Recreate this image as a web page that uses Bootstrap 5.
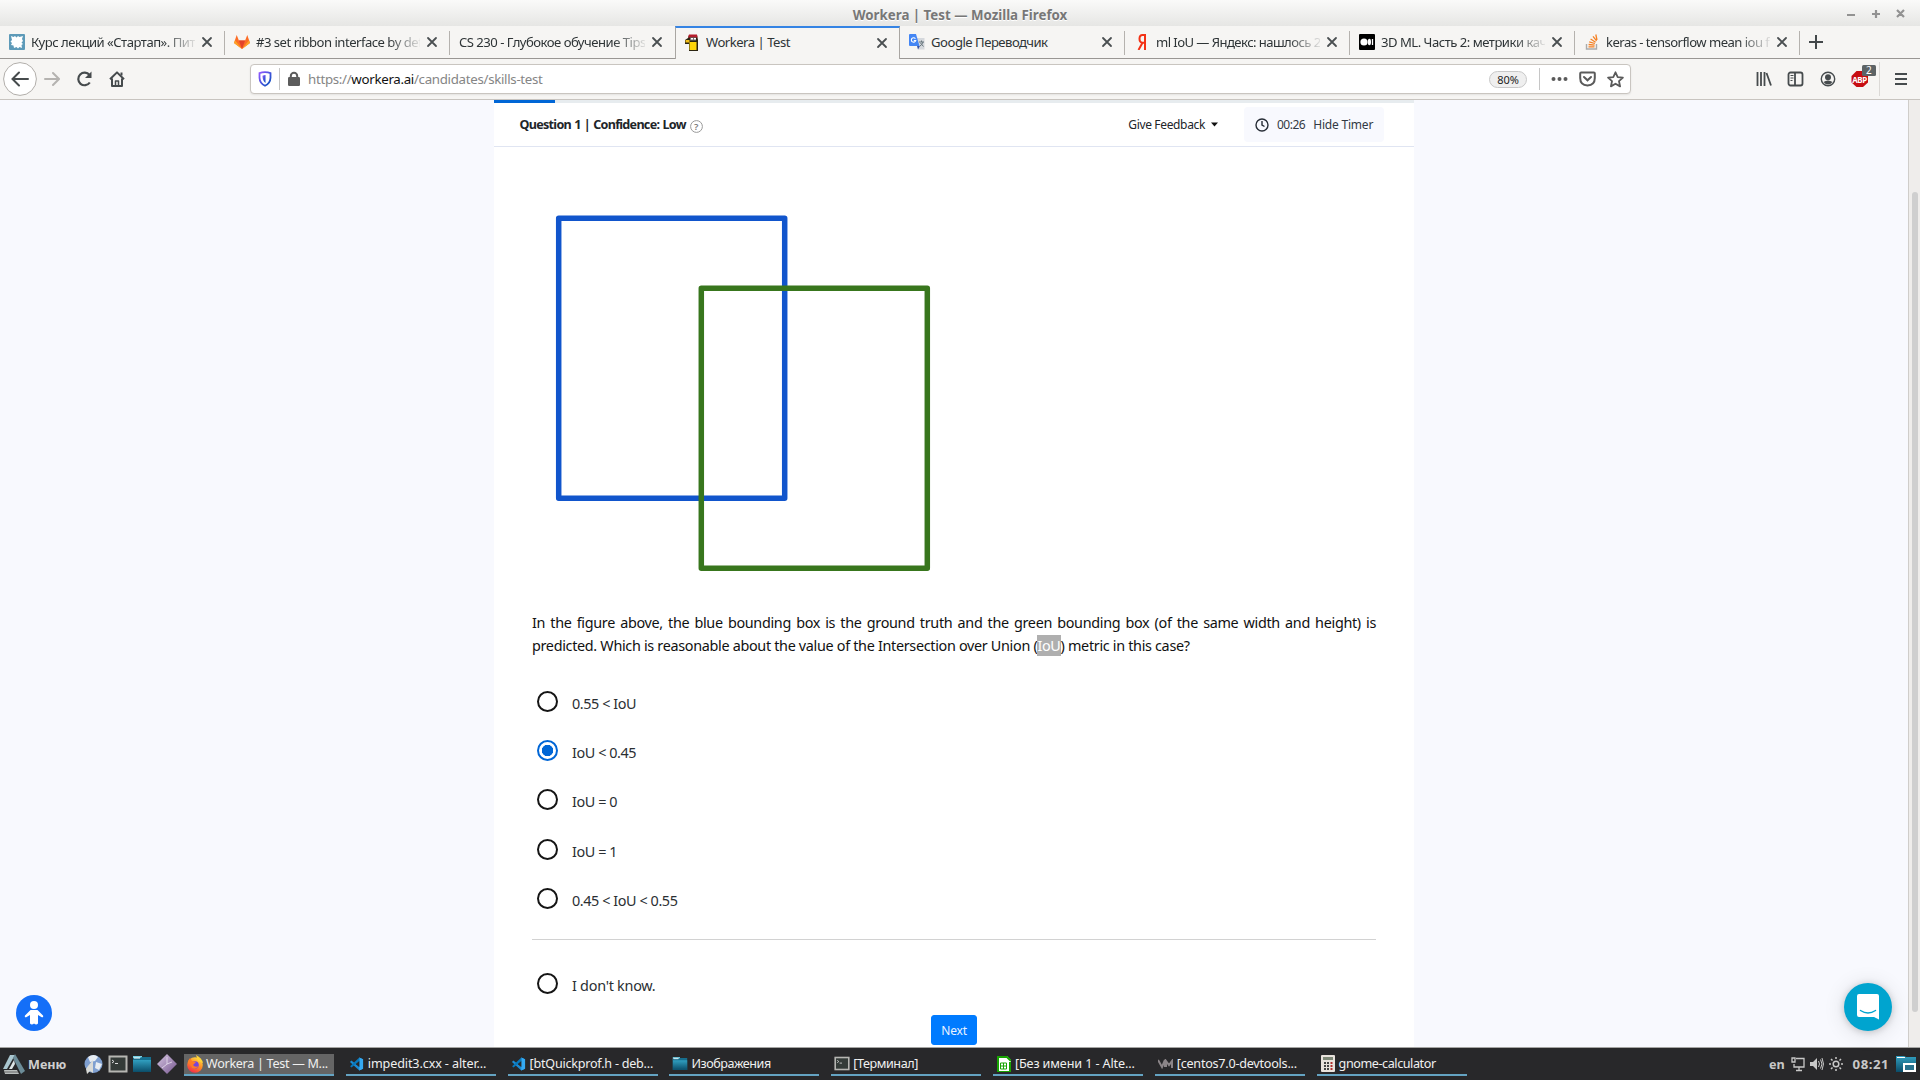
<!DOCTYPE html>
<html lang="ru">
<head>
<meta charset="utf-8">
<title>Workera | Test</title>
<link rel="stylesheet" href="https://cdn.jsdelivr.net/npm/bootstrap@5.3.0/dist/css/bootstrap.min.css">
<style>
body{font-family:"Noto Sans","Open Sans",sans-serif;width:1920px;height:1080px;overflow:hidden;background:#f8f9fe;color:#212529;font-size:13px;line-height:1.2}
svg{display:block;flex:none}
.winbar{height:26px;background:linear-gradient(#fafaf9,#e6e6e4);color:#777}
.winbar .wtitle{font-weight:700;font-size:13.3px;padding-top:8px;line-height:15px;text-shadow:0 1px 0 #fff}
.winctl{right:14px;top:6px}
.tabstrip{height:33px;background:#f6f5f3}
.btab{width:225px;height:33px;padding:0 12px 0 9px;border-bottom:1px solid #999693;color:#2e3436;font-size:13.1px;letter-spacing:-.5px;position:relative}
.btab::after{content:"";position:absolute;right:0;top:5px;height:24px;width:1px;background:#b5b2ae}
.btab.noline::after{display:none}
.btab.current{border-top:2px solid #3584e4;border-bottom:0;border-left:1px solid #a9a6a2;border-right:1px solid #a9a6a2;padding-bottom:2px;padding-left:8px;padding-right:11px}
.btab .tlabel{flex:1 1 0;overflow:hidden;white-space:nowrap;margin-left:6px;margin-right:6px;padding-top:1px}
.btab .fade-end{-webkit-mask-image:linear-gradient(to right,#000 calc(100% - 32px),rgba(0,0,0,.1));mask-image:linear-gradient(to right,#000 calc(100% - 32px),rgba(0,0,0,.1))}
.tabrest{flex:1;border-bottom:1px solid #999693}
.toolbar-ff{height:41px;background:#f6f5f3;border-bottom:1px solid #c8c4bf}
.navicons{width:250px;padding-left:3px}
.urlbox{width:1381px;height:30px;border:1px solid #c9c5c0;border-radius:4px;background:#fff;box-shadow:0 1px 2px rgba(0,0,0,.08);color:#858585;font-size:13.3px}
.urlbox .address{margin-left:7px;padding-top:1px;letter-spacing:-.31px}
.urlbox b{font-weight:400;color:#111}
.vline{width:1px;height:22px;background:#c6c6c6}
.zoompill{width:38px;height:17px;border:1px solid #c8c8c8;border-radius:9px;background:#efefef;color:#222;font-size:11px;line-height:15px;margin-right:1px}
.viewport{height:947px}
.pane{width:1908px}
.sheet{width:920px;background:#fff}
.qprogress{height:3px;background:#e7ecef;border-radius:0}
.qprogress .progress-bar{background:#0066d6}
.qhead{height:44px;padding:0 30px 0 25.5px;border-bottom:1px solid #e0e5f2;font-size:12px}
.qhead>span,.timerbox span{padding-top:1px}
.qtitle{font-weight:700;font-size:12.6px;letter-spacing:-.72px;word-spacing:.6px}
.timerbox{width:140px;height:35px;background:#f8f9fe;border-radius:4px;padding-left:11px;color:#333a44}
.qtext{margin:0 38px;line-height:23px;font-size:14.4px;color:#111;text-align:justify;letter-spacing:-.32px}
.picked{background:#afafaf;color:#fff;padding:1px 0}
.opts{padding-left:43px}
.opt{height:49.2px;font-size:14.4px;color:#2b2f33;letter-spacing:-.42px}
.ring{width:21px;height:21px;border:2px solid #151515;border-radius:50%;margin-right:14px}
.ring.on{border-color:#0066d6;background:radial-gradient(circle,#0066d6 0 5.4px,#fff 6px)}
.opt span{padding-top:4px}
.rule{height:1px;background:#d2d2d2;margin:0 38px}
.btn-next{width:46px;height:30px;background:#007bff;border-color:#007bff;color:#e8f3ff;font-size:12px;border-radius:3px;padding:1px 0 0;letter-spacing:-.2px}
.scroller{width:12px;background:#efedeb;border-left:1px solid #cfcdca}
.thumb{width:6px;height:820px;margin:92px 0 0 3px;border-radius:4px;background:#cfcfcf}
.a11y{left:16px;top:895px}
.chat{left:1844px;top:883px;width:48px;height:48px;border-radius:50%;background:#00a4cf;box-shadow:0 1px 7px rgba(0,0,0,.18),0 2px 22px rgba(0,0,0,.12)}
.panelbar{height:33px;background:#28282a;border-top:1px solid #a5a5a3;color:#f0f0f0;font-size:12.6px}
.panelbar span{padding-top:1px}
.menu-btn{width:84px;padding-left:2px;font-weight:700;color:#cfcfcf}
.quick{width:100px}
.tasks{gap:11.8px;padding-top:1px}
.task{width:150px;height:22px;border-bottom:2px solid #64a3c2;padding-left:3px;white-space:nowrap;letter-spacing:-.12px}
.task.tight{letter-spacing:-.43px}
.task.snug{letter-spacing:-.24px}
.task.live{background:#656565;letter-spacing:-.3px}
.panelbar .tray{color:#c8c8c8;font-weight:700;margin-right:4px}
.clock{font-size:13.2px;letter-spacing:.5px;margin-left:10px}
</style>
<script src="https://cdn.jsdelivr.net/npm/bootstrap@5.3.0/dist/js/bootstrap.bundle.min.js"></script>
</head>
<body class="d-flex flex-column">
<svg width="0" height="0" class="position-absolute">
<symbol id="x" viewBox="0 0 12 12"><path d="M2 2l8 8M10 2l-8 8" stroke="#4a4f51" stroke-width="1.8" stroke-linecap="round"/></symbol>
<symbol id="vs" viewBox="0 0 16 16"><path d="M11 1l4 2v10l-4 2L1 5.800 2.500 4.300 11 11z" fill="#1b8bd4"/><path d="M11 1l4 2v10l-4 2z" fill="#35a9f2"/><path d="M11 4.800v6.400L7 8z" fill="#28282a"/><path d="M1.200 10.400L11 1v3.800L2.700 11.800z" fill="#0879bd"/></symbol>
<symbol id="folder" viewBox="0 0 20 18"><path d="M1 1h9v4H1z" fill="#78d0e4"/><path d="M1 3h7l2-1h9v15H1z" fill="#176e8d"/><path d="M1 5h18v12H1z" fill="url(#fg)"/><path d="M2 3h6" stroke="#fff"/></symbol>
<symbol id="term" viewBox="0 0 20 18"><path d="M.5.5h19v17H.5z" fill="#b6b6b2"/><path d="M2.500 2.500h15v13h-15z" fill="#343b38"/><path d="M4 5l2 1.500L4 8M7 8.500h3" fill="none" stroke="#ddd"/></symbol>
<linearGradient id="fg" x2="0" y2="1"><stop stop-color="#319fc0"/><stop offset="1" stop-color="#0b4d69"/></linearGradient>
<linearGradient id="ff" x1=".8" y1="0" x2=".3" y2="1"><stop stop-color="#ffe34a"/><stop offset=".5" stop-color="#ff8a22"/><stop offset="1" stop-color="#f5274e"/></linearGradient>
<linearGradient id="sh" x2="1" y2="1"><stop stop-color="#9059ff"/><stop offset="1" stop-color="#0250bb"/></linearGradient>
<linearGradient id="dm" x2="1" y2="1"><stop stop-color="#d6c6e2"/><stop offset="1" stop-color="#76568f"/></linearGradient>
</svg>

<header class="winbar position-relative text-center">
  <div class="wtitle">Workera | Test — Mozilla Firefox</div>
  <svg class="winctl position-absolute" width="60" height="16" fill="none" stroke="#929292" stroke-width="2.2"><path d="M1 9h8M26 8h8M30 4v8M51 4l7 7M58 4l-7 7"/></svg>
</header>

<nav class="tabstrip d-flex">
  <div class="btab d-flex align-items-center">
    <svg width="16" height="16"><rect width="16" height="16" rx="1" fill="#5d9ab8"/><path d="M2 2l2.500 1L6 2l1.500 1.500L9 2l1.500 1L14 2l-1 3 1 2-1.500 1.500L14 10l-1.500 1 .5 3-2.500-1L9 14.500 7.500 13 5 14l-.5-2.500L2 11l1-2-1.500-1.500L3 6z" fill="#fff"/></svg>
    <span class="tlabel fade-end">Курс лекций «Стартап». Питер</span><svg width="12" height="12"><use href="#x"/></svg></div>
  <div class="btab d-flex align-items-center">
    <svg width="16" height="16" viewBox="0 0 16 16"><path d="M8 15L0 9l2.700-8 2.200 5.500h6.200L13.300 1 16 9z" fill="#fc6d26"/><path d="M8 15L4.900 6.500h6.200z" fill="#e24329"/><path d="M0 9l1-2.800L8 15zM16 9l-1-2.800L8 15z" fill="#fca326"/></svg>
    <span class="tlabel fade-end">#3 set ribbon interface by default</span><svg width="12" height="12"><use href="#x"/></svg></div>
  <div class="btab noline d-flex align-items-center">
    <span class="tlabel fade-end ms-0">CS 230 - Глубокое обучение Tips</span><svg width="12" height="12"><use href="#x"/></svg></div>
  <div class="btab current d-flex align-items-center noline">
    <svg width="16" height="18" viewBox="0 0 16 18"><path d="M5 1h8l1 5v11H5v-7H1V6l3-2z" fill="#2b2411"/><path d="M5.500 8h7v8h-7z" fill="#ffd60a"/><path d="M5 .5h8l.5 3H4z" fill="#b51d2d"/><path d="M1.500 6h4v2.500h-4z" fill="#f2bf18"/><path d="M6 3.500h6v3H6z" fill="#777"/><path d="M7 4h2v1.500H7zM10 4h2v1.500h-2z" fill="#fff"/></svg>
    <span class="tlabel">Workera | Test</span><svg width="12" height="12"><use href="#x"/></svg></div>
  <div class="btab d-flex align-items-center">
    <svg width="16" height="16" viewBox="0 0 16 16"><path d="M6 4h9.500v11.500H9z" fill="#d5d8dc"/><path d="M0 1q0-1 1-1h6l3.500 12H1q-1 0-1-1z" fill="#4486f4"/><path d="M8 12h3l-2 3.500z" fill="#3454a8"/><path d="M6.400 4.700A2.200 2.200 0 1 0 6.700 6.500H4.800" fill="none" stroke="#fff" stroke-width="1.100"/><path d="M10 8h5M12.500 6.500V8M14 8q-1 3-3 4M11.500 9l3 3.500" stroke="#68767c" fill="none"/></svg>
    <span class="tlabel">Google Переводчик</span><svg width="12" height="12"><use href="#x"/></svg></div>
  <div class="btab d-flex align-items-center">
    <svg width="16" height="16" viewBox="0 0 16 16"><path d="M11 0v16M11 1H8.500Q5.500 1 5.500 4.800T8.500 8.700H11M8.500 8.700L4.500 16" fill="none" stroke="#f33216" stroke-width="2"/></svg>
    <span class="tlabel fade-end" style="letter-spacing:-.57px">ml IoU — Яндекс: нашлось 2 тыс</span><svg width="12" height="12"><use href="#x"/></svg></div>
  <div class="btab d-flex align-items-center">
    <svg width="16" height="16"><rect width="16" height="16" rx="1" fill="#000"/><circle cx="5" cy="8" r="3.600" fill="#fff"/><ellipse cx="10.400" cy="8" rx="1.600" ry="3.300" fill="#fff"/><path d="M13.500 5v6" stroke="#fff" stroke-width="1.300"/></svg>
    <span class="tlabel fade-end">3D ML. Часть 2: метрики качества</span><svg width="12" height="12"><use href="#x"/></svg></div>
  <div class="btab d-flex align-items-center">
    <svg width="16" height="16" viewBox="0 0 16 16" fill="none"><path d="M2.500 10v5h10v-5" stroke="#aaa" stroke-width="1.400"/><path d="M4.500 12.800h6M4.600 10.500l6 .7M5.200 7.800l5.700 1.700M6.600 5l5 3.200M9 2.300l3.600 4.500M11.800.5l1.200 5.500" stroke="#f48024" stroke-width="1.300"/></svg>
    <span class="tlabel fade-end" style="letter-spacing:-.54px">keras - tensorflow mean iou for</span><svg width="12" height="12"><use href="#x"/></svg></div>
  <div class="tabrest d-flex align-items-center ps-2"><svg width="16" height="16"><path d="M1 8h14M8 1v14" stroke="#43484a" stroke-width="2"/></svg></div>
</nav>

<div class="toolbar-ff d-flex align-items-center">
  <div class="navicons d-flex align-items-center">
    <svg width="34" height="34" fill="none"><circle cx="17" cy="17" r="16.400" fill="#fff" stroke="#b1aeaa"/><path d="M25 17H10M16 10.500L9.500 17l6.500 6.500" stroke="#464b4d" stroke-width="2" stroke-linecap="round"/></svg>
    <svg style="margin-left:7px" width="16" height="16" fill="none" stroke="#b5b3b0" stroke-width="2" stroke-linecap="round"><path d="M1 8h13M9 2l6 6-6 6"/></svg>
    <svg style="margin-left:16px" width="18" height="18" fill="none" stroke="#464b4d" stroke-width="2.200"><path d="M13.800 12.500A6.300 6.300 0 1 1 13.500 5"/><path d="M15.500 1.500v6.500H9z" fill="#464b4d" stroke="none"/></svg>
    <svg style="margin-left:15px" width="16" height="16" fill="none" stroke="#464b4d" stroke-width="2" stroke-linejoin="round"><path d="M1 8.200L8 1.400l7 6.800M3 7.500V15h10V7.500"/><path d="M6.500 15v-5h3v5z" stroke-width="1.500"/><path d="M12.500 1.500v3"/></svg>
  </div>
  <div class="urlbox d-flex align-items-center">
    <svg style="margin-left:7px" width="14" height="16" viewBox="0 0 14 16" fill="none"><path d="M7 1.200q3 0 5.500 1v4.500Q12.200 12.500 7 14.800 1.800 12.500 1.500 6.700V2.200Q4 1.200 7 1.200z" stroke="url(#sh)" stroke-width="1.800"/><path d="M7.500 4v8Q4.500 10 4.500 4.800 6 4 7.500 4z" fill="url(#sh)"/></svg>
    <div class="vline" style="margin:0 7px 0 7px"></div>
    <svg width="14" height="16"><rect x="1" y="6" width="12" height="9" rx="1.200" fill="#5c5c5c"/><path d="M3.800 7V5a3.200 3.200 0 0 1 6.400 0v2" fill="none" stroke="#5c5c5c" stroke-width="2"/></svg>
    <span class="address">https://<b>workera.ai</b>/candidates/skills-test</span>
    <div class="zoompill text-center ms-auto">80%</div>
    <div class="vline" style="margin:0 11px 0 11px"></div>
    <svg width="17" height="6" fill="#5a5a5a"><circle cx="2.500" cy="3" r="2"/><circle cx="8.500" cy="3" r="2"/><circle cx="14.500" cy="3" r="2"/></svg>
    <svg style="margin-left:11px" width="17" height="16" fill="none" stroke="#5a5a5a" stroke-width="2"><path d="M2.200 1.500h12.600q1 0 1 1V7q0 7-7.300 7.500Q1.200 14 1.200 7V2.500q0-1 1-1z"/><path d="M5 6l3.500 3.300L12 6" stroke-linecap="round"/></svg>
    <svg style="margin:0 6px 0 11px" width="17" height="17" viewBox="0 0 17 17" fill="none" stroke="#5a5a5a" stroke-width="1.800" stroke-linejoin="round"><path d="M8.500 1.300l2.200 4.800 5.200.6-3.900 3.500 1.100 5.200-4.600-2.700-4.600 2.700L5 10.200 1.100 6.700l5.200-.6z"/></svg>
  </div>
  <div class="d-flex align-items-center ms-auto position-relative" style="margin-right:13px">
    <svg width="16" height="16" stroke="#464b4d" stroke-width="1.800"><path d="M1.500 1v14M5 1v14M8.500 1v14M10.500 2l4.500 12.500"/></svg>
    <svg style="margin-left:15px" width="17" height="16" fill="none" stroke="#464b4d" stroke-width="1.800"><rect x="1.500" y="1.500" width="14" height="13" rx="2"/><path d="M8 2v12"/><path d="M3.500 4.500h3M3.500 7h3M3.500 9.500h2" stroke-width="1"/></svg>
    <svg style="margin-left:16px" width="16" height="16"><circle cx="8" cy="8" r="6.700" fill="none" stroke="#464b4d" stroke-width="1.400"/><circle cx="8" cy="6.200" r="3" fill="#464b4d"/><path d="M3.500 11q2-1.500 4.500-1.500t4.500 1.500Q10.500 13.500 8 13.500T3.500 11z" fill="#464b4d"/></svg>
    <svg style="margin-left:15px" width="25" height="30" viewBox="0 0 25 30"><path d="M5.500 7h6.500L17 12v6.500L12 23H5.500L.5 18.500V12z" fill="#c70d12"/><text x="1.200" y="18.500" font-size="8" font-weight="700" fill="#fff" textLength="15">ABP</text><rect x="11" y="1" width="14" height="11" rx="1.500" fill="#5d6365"/><text x="15" y="10.300" font-size="10" fill="#fff">2</text></svg>
    <div class="vline" style="height:34px;margin:0 15px 0 3px;background:#dbd9d6"></div>
    <svg width="12" height="14" stroke="#464b4d" stroke-width="2"><path d="M0 2h12M0 7h12M0 12h12"/></svg>
  </div>
</div>

<main class="viewport d-flex position-relative">
  <div class="pane d-flex justify-content-center">
    <section class="sheet d-flex flex-column">
      <div class="progress qprogress"><div class="progress-bar" style="width:6.6%"></div></div>
      <div class="qhead d-flex align-items-center">
        <span class="qtitle">Question 1 | Confidence: Low</span>
        <svg style="margin:3px 0 0 4px" width="13" height="13"><circle cx="6.500" cy="6.500" r="5.900" fill="none" stroke="#999"/><text x="4" y="10" font-size="9.500" fill="#777" font-weight="600">?</text></svg>
        <span class="ms-auto" style="letter-spacing:-.35px">Give Feedback</span>
        <svg style="margin:0 26px 0 6px" width="7" height="5"><path d="M0 .5h7L3.500 4.500z" fill="#111"/></svg>
        <div class="timerbox d-flex align-items-center">
          <svg width="14" height="14" fill="none" stroke="#272d36" stroke-width="1.400"><circle cx="7" cy="7" r="6"/><path d="M7 3v4l2.500 1.500"/></svg>
          <span style="margin-left:8px;letter-spacing:-.5px">00:26</span><span style="margin-left:8px;letter-spacing:-.2px">Hide Timer</span>
        </div>
      </div>
      <svg width="920" height="464" fill="none" stroke-width="5.500" stroke-linejoin="round"><rect x="64.700" y="71.300" width="226" height="280" stroke="#1155cc"/><rect x="207.300" y="141.300" width="226" height="280" stroke="#38761d"/></svg>
      <p class="qtext">In the figure above, the blue bounding box is the ground truth and the green bounding box (of the same width and height) is predicted. Which is reasonable about the value of the Intersection over Union (<span class="picked">IoU</span>) metric in this case?</p>
      <div class="opts" style="padding-top:20px">
        <div class="opt d-flex align-items-center"><i class="ring"></i><span>0.55 &lt; IoU</span></div>
        <div class="opt d-flex align-items-center"><i class="ring on"></i><span>IoU &lt; 0.45</span></div>
        <div class="opt d-flex align-items-center"><i class="ring"></i><span>IoU = 0</span></div>
        <div class="opt d-flex align-items-center"><i class="ring"></i><span>IoU = 1</span></div>
        <div class="opt d-flex align-items-center"><i class="ring"></i><span>0.45 &lt; IoU &lt; 0.55</span></div>
      </div>
      <div class="rule" style="margin-top:16px"></div>
      <div class="opts" style="padding-top:19px"><div class="opt d-flex align-items-center" style="letter-spacing:-.25px"><i class="ring"></i><span>I don't know.</span></div></div>
      <button class="btn btn-primary btn-next" style="margin:7px 0 0 437px">Next</button>
    </section>
  </div>
  <div class="scroller"><div class="thumb"></div></div>
  <svg class="a11y position-absolute" width="36" height="36" viewBox="0 0 36 36"><circle cx="18" cy="18" r="18" fill="#146ff8"/><circle cx="18" cy="10" r="4" fill="#fff"/><path d="M14.500 15h7l5.500 5.500q.8 1.800-1.200 1.800L22 20v8.500q-1.800 2-4 0-2.200 2-4 0V20l-3.800 2.300Q8.200 22.300 9 20.500z" fill="#fff"/></svg>
  <div class="chat position-absolute d-flex align-items-center justify-content-center"><svg width="22" height="26" fill="#fff"><path d="M2 0h18q2 0 2 2v23.500l-5-2.500H2q-2 0-2-2V2q0-2 2-2z"/><path d="M3.500 16.500q7.500 5 15 0" fill="none" stroke="#00a4cf" stroke-width="1.500" stroke-linecap="round"/></svg></div>
</main>

<footer class="panelbar d-flex align-items-center">
  <div class="menu-btn d-flex align-items-center"><svg width="23" height="21" viewBox="0 0 23 21"><path d="M8 1h5L5 15H1z" fill="#a9c6cf"/><path d="M13 0l10 17-4 3L11 4z" fill="#6c8c98"/><path d="M12 6l-5 9h3l3-5z" fill="#dde5e6"/><path d="M2 16h13l2 4H3z" fill="#b9bdbc"/><path d="M3 18h13" stroke="#666"/></svg><span style="margin-left:3px">Меню</span></div>
  <div class="quick d-flex align-items-center">
    <svg width="19" height="20"><circle cx="9.500" cy="10" r="9" fill="#7f9fd0"/><path d="M4 3q6-4 10 0l-3 4-5 1zM12 8l6 2-3 6-4-2z" fill="#e8edf3"/><path d="M9 6v13l-3-2-3 3-1-5 2-3z" fill="#d9dad7"/></svg>
    <svg style="margin-left:5px" width="20" height="18"><use href="#term"/></svg>
    <svg style="margin-left:4px" width="20" height="18"><use href="#folder"/></svg>
    <svg style="margin-left:5px" width="20" height="20"><path d="M10 0l10 10-10 10L0 10z" fill="url(#dm)"/><path d="M10 3v7l-5 4M10 10l5-2" stroke="#e9dff0" stroke-width=".8" fill="none"/></svg>
  </div>
  <div class="d-flex tasks">
    <div class="task live d-flex align-items-center"><svg width="16" height="18" viewBox="0 0 16 18"><circle cx="8" cy="10" r="7.800" fill="url(#ff)"/><path d="M9 0q6 3 7 8l-5-2z" fill="#ffd236"/><circle cx="8" cy="10" r="3.800" fill="#7544dc"/><path d="M1 6l2-3 2 3 4 1-3 3q2 3 6 1-3 4-7 2z" fill="#ff7a24"/></svg><span style="margin-left:3px">Workera | Test — M...</span></div>
    <div class="task d-flex align-items-center"><svg width="15" height="16"><use href="#vs"/></svg><span class="ms-1">impedit3.cxx - alter...</span></div>
    <div class="task snug d-flex align-items-center"><svg width="15" height="16"><use href="#vs"/></svg><span class="ms-1">[btQuickprof.h - deb...</span></div>
    <div class="task tight d-flex align-items-center"><svg width="16" height="15"><use href="#folder"/></svg><span style="margin-left:3px">Изображения</span></div>
    <div class="task tight d-flex align-items-center"><svg width="16" height="15"><use href="#term"/></svg><span style="margin-left:3px">[Терминал]</span></div>
    <div class="task d-flex align-items-center"><svg style="margin-left:1px" width="14" height="16"><path d="M1 0h9l4 4v12H1z" fill="#fff"/><path d="M1 0v16h12V6M1 1h9l4 4" stroke="#18a303" stroke-width="2" fill="none"/><path d="M3.500 7h6v6h-6zM3.500 10h6M6.500 7v6" fill="none" stroke="#18a303"/></svg><span class="ms-1">[Без имени 1 - Alte...</span></div>
    <div class="task snug d-flex align-items-center"><svg width="15" height="10" fill="none" stroke="#8b8588" stroke-width="2"><path d="M0 1l4 7 3-7v7M8 8V2l3 4 3-4v7"/></svg><span class="ms-1">[centos7.0-devtools...</span></div>
    <div class="task tight d-flex align-items-center"><svg style="margin-left:1px" width="14" height="17"><rect width="14" height="17" rx="1" fill="#e8e2dc"/><path d="M2 2h10v3H2z" fill="#7d8776"/><path d="M3 8h2M6 8h2M3 11h2M6 11h2M3 14h2M6 14h2" stroke="#444" stroke-width="2"/><path d="M9.500 8h2M9.500 11h2M9.500 14h2" stroke="#b03030" stroke-width="2"/></svg><span class="ms-1">gnome-calculator</span></div>
  </div>
  <div class="tray d-flex align-items-center ms-auto"><span>en</span>
    <svg style="margin-left:6px" width="14" height="15" fill="none" stroke="#c8c8c8" stroke-width="1.300"><path d="M5 1.500h8v8.500H3V7M1 1h3v4H1zM8 10v3M5 13.500h6"/></svg>
    <svg style="margin-left:5px" width="14" height="14"><path d="M0 5h3l4-4v12L3 9H0z" fill="#c8c8c8"/><path d="M8.500 4q2 3 0 6M10.500 2.500q3 4.500 0 9M12 1q3 6 0 12" stroke="#c8c8c8" fill="none"/></svg>
    <svg style="margin-left:5px" width="14" height="14" stroke="#c8c8c8" fill="none" stroke-width="1.500"><circle cx="7" cy="7" r="2.800"/><path d="M7 0v2M7 12v2M0 7h2M12 7h2M2 2l1.500 1.500M10.500 10.500L12 12M2 12l1.500-1.500M10.500 3.500L12 2"/></svg>
    <span class="clock">08:21</span>
    <svg style="margin-left:7px" width="20" height="17"><path d="M0 0h8l2 1h10v15H0z" fill="url(#fg)"/><path d="M1 1.500h8" stroke="#fff"/><path d="M8 8h11v7H8z" fill="#28718d" stroke="#fff" stroke-width="2"/></svg>
  </div>
</footer>
</body>
</html>
